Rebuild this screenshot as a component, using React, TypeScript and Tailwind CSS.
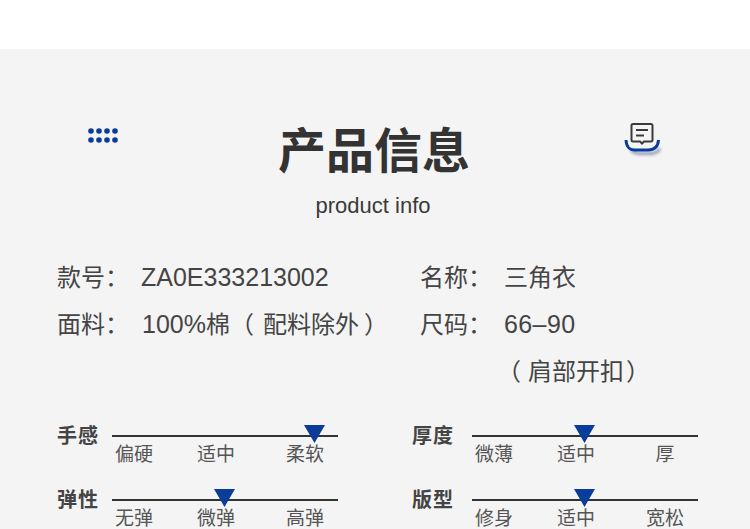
const cjk = "font-['Liberation_Sans','Noto_Sans_CJK_SC',sans-serif]";

const lat = 'text-[25px]';

const meters = [
  {
    labelW: 'w-[55px]',
    rows: [
      { name: '手感', marks: ['偏硬', '适中', '柔软'], pos: 'left-[192px]' },
      { name: '弹性', marks: ['无弹', '微弹', '高弹'], pos: 'left-[102px]' },
    ],
  },
  {
    labelW: 'w-[60px]',
    rows: [
      { name: '厚度', marks: ['微薄', '适中', '厚'], pos: 'left-[102px]' },
      { name: '版型', marks: ['修身', '适中', '宽松'], pos: 'left-[102px]' },
    ],
  },
];

function Meter({ name, marks, pos, labelW }: { name: string; marks: string[]; pos: string; labelW: string }) {
  return (
    <div className="flex h-[64px] items-start">
      <div className={`${labelW} mt-[-1px] text-[20px] leading-[24px] font-bold tracking-[1px] text-[#444444]`}>{name}</div>
      <div className="relative w-[226px] pt-[10px]">
        <div className="h-[2px] bg-[#333333]"></div>
        <svg className={`absolute top-0 ${pos}`} width="21" height="18" viewBox="0 0 21 18">
          <path d="M0 0H21L10.5 18Z" fill="#0a3d9a" />
        </svg>
        <div className="mt-[6px] grid grid-cols-[82px_89px_1fr] pl-[3px] text-[19px] leading-[24px] text-[#555555]">
          {marks.map((m) => (
            <span key={m} className="w-[38px] text-center whitespace-nowrap">{m}</span>
          ))}
        </div>
      </div>
    </div>
  );
}

export default function App() {
  return (
    <div className={`h-[529px] w-[750px] overflow-hidden bg-white ${cjk}`}>
      <div className="h-[49px]"></div>
      <div className="h-[480px] bg-[#f4f4f4]">
        <div className="flex items-start justify-between pt-[73px] pr-[87px] pl-[88px]">
          <svg className="mt-[6px]" width="31" height="16" viewBox="0 0 31 16" fill="#0a3d9a">
            <circle cx="3" cy="3" r="2.8" />
            <circle cx="11" cy="3" r="2.8" />
            <circle cx="19" cy="3" r="2.8" />
            <circle cx="27" cy="3" r="2.8" />
            <circle cx="3" cy="12" r="2.8" />
            <circle cx="11" cy="12" r="2.8" />
            <circle cx="19" cy="12" r="2.8" />
            <circle cx="27" cy="12" r="2.8" />
          </svg>
          <svg width="40" height="36" viewBox="0 0 40 36" fill="none">
            <path className="blur-[1.5px]" d="M8 28c3 3 5 3.500 9 3.500h10c5 0 8-1.500 10-5" stroke="#8f9ab3" strokeWidth="3" />
            <path d="M3 18c.5 7 3 10 9 10h13c6 0 10-3 10.500-10" stroke="#0a3d9a" strokeWidth="3" />
            <path d="M10 2h18a1.500 1.500 0 0 1 1.500 1.500v14.500a1.500 1.500 0 0 1-1.500 1.500h-7l-2 2-2-2h-7a1.500 1.500 0 0 1-1.500-1.500V3.500A1.500 1.500 0 0 1 10 2Z" stroke="#3a3a3a" strokeWidth="2" />
            <path d="M13 8h12M13 13.500h8" stroke="#3a3a3a" strokeWidth="2" />
          </svg>
        </div>

        <div className="mt-[-34px] text-center">
          <h1 className="pr-[2px] text-[48px] leading-[56px] font-bold text-[#333333]">产品信息</h1>
          <p className="mt-[13px] pr-[4px] text-[22px] leading-[26px] text-[#3a3a3a]">product info</p>
        </div>

        <div className="mt-[35px] grid grid-cols-[363px_1fr] pl-[57px] text-[24px] leading-[47px] text-[#444444]">
          <div>
            <div className="flex whitespace-nowrap">
              <span className="w-[84px]">款号：</span>
              <span className={lat}>ZA0E333213002</span>
            </div>
            <div className="flex whitespace-nowrap">
              <span className="w-[84px]">面料：</span>
              <span className="pl-[1px]">
                <span className={lat}>100%</span>棉（<span className="ml-[9px]">配料除外</span><span className="ml-[5px]">）</span>
              </span>
            </div>
          </div>
          <div>
            <div className="flex whitespace-nowrap">
              <span className="w-[84px]">名称：</span>
              <span>三角衣</span>
            </div>
            <div className="flex whitespace-nowrap">
              <span className="w-[84px]">尺码：</span>
              <span className={`${lat} tracking-[0.4px]`}>66–90</span>
            </div>
            <div className="pl-[77px] whitespace-nowrap">
              （<span className="ml-[7px]">肩部开扣</span><span className="ml-[2px]">）</span>
            </div>
          </div>
        </div>

        <div className="mt-[30px] grid grid-cols-[355px_1fr] pl-[57px]">
          {meters.map((col) => (
            <div key={col.labelW}>
              {col.rows.map((m) => (
                <Meter key={m.name} {...m} labelW={col.labelW} />
              ))}
            </div>
          ))}
        </div>
      </div>
    </div>
  );
}
